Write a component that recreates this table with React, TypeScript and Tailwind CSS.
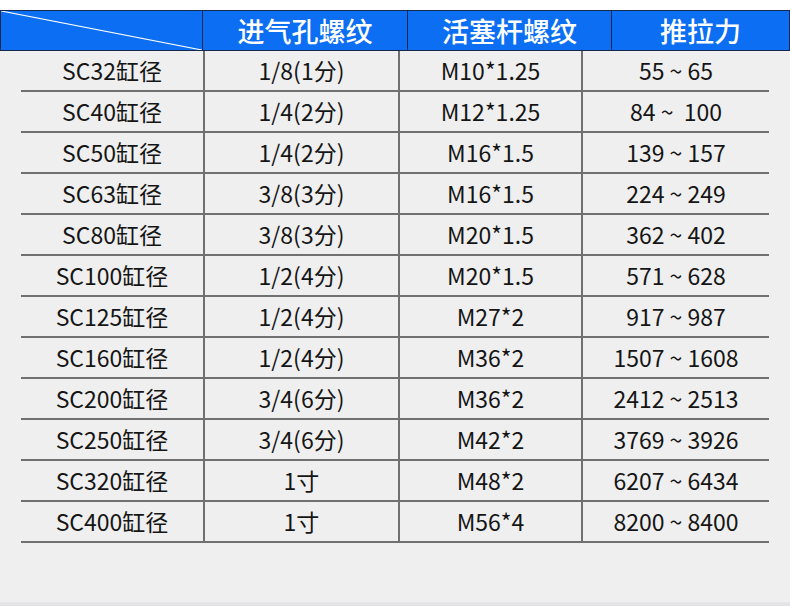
import React from 'react';

const rows: [string, string, string, string][] = [
  ['SC32缸径', '1/8(1分)', 'M10*1.25', '55 ~ 65'],
  ['SC40缸径', '1/4(2分)', 'M12*1.25', '84 ~  100'],
  ['SC50缸径', '1/4(2分)', 'M16*1.5', '139 ~ 157'],
  ['SC63缸径', '3/8(3分)', 'M16*1.5', '224 ~ 249'],
  ['SC80缸径', '3/8(3分)', 'M20*1.5', '362 ~ 402'],
  ['SC100缸径', '1/2(4分)', 'M20*1.5', '571 ~ 628'],
  ['SC125缸径', '1/2(4分)', 'M27*2', '917 ~ 987'],
  ['SC160缸径', '1/2(4分)', 'M36*2', '1507 ~ 1608'],
  ['SC200缸径', '3/4(6分)', 'M36*2', '2412 ~ 2513'],
  ['SC250缸径', '3/4(6分)', 'M42*2', '3769 ~ 3926'],
  ['SC320缸径', '1寸', 'M48*2', '6207 ~ 6434'],
  ['SC400缸径', '1寸', 'M56*4', '8200 ~ 8400'],
];

const font = { fontFamily: '"Noto Sans CJK SC", "Noto Sans", sans-serif' };

export default function App() {
  return (
    <div className="w-[790px] h-[606px] bg-[#efefef] flex flex-col overflow-hidden" style={font}>
      <div className="h-[10px] bg-white" />
      {/* header */}
      <div className="h-[41px] bg-[#0b6ef3] border border-[#14284d] flex text-white text-[27px] font-medium">
        <div className="w-[201px] relative">
          <svg className="absolute inset-0" width="201" height="39" viewBox="0 0 201 39">
            <line x1="0" y1="0" x2="201" y2="39" stroke="#ffffff" strokeWidth="1.2" />
          </svg>
        </div>
        <div className="w-[205px] border-l border-[#14284d] flex items-center justify-center leading-none">进气孔螺纹</div>
        <div className="w-[204px] border-l border-[#14284d] flex items-center justify-center leading-none">活塞杆螺纹</div>
        <div className="flex-1 border-l border-[#14284d] flex items-center justify-center leading-none">推拉力</div>
      </div>
      {/* body */}
      <div className="ml-[21px] w-[748px] flex flex-col text-[23px] text-[#151515]">
        {rows.map((r, i) => (
          <div key={i} className="h-[41px] flex border-b-2 border-[#707070]">
            <div className="w-[182px] flex items-center justify-center">{r[0]}</div>
            <div className="w-[195px] border-l-2 border-[#707070] flex items-center justify-center">{r[1]}</div>
            <div className="w-[183px] border-l-2 border-[#707070] flex items-center justify-center">{r[2]}</div>
            <div className="flex-1 border-l-2 border-[#707070] flex items-center justify-center whitespace-pre">{r[3]}</div>
          </div>
        ))}
      </div>
      <div className="flex-1" />
      <div className="h-[4px] bg-[#e4e4e8]" />
    </div>
  );
}
